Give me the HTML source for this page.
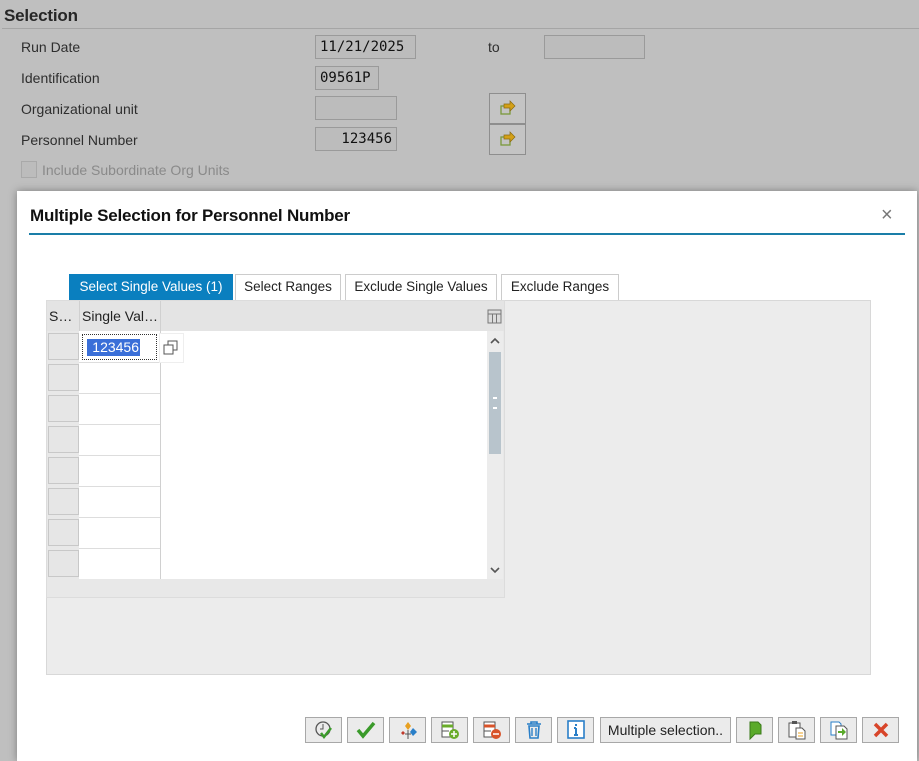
<!DOCTYPE html>
<html><head><style>
*{box-sizing:border-box;margin:0;padding:0}
body{width:919px;height:757px;background:#bfbfbf;font-family:"Liberation Sans",Arial,sans-serif;position:relative;overflow:hidden;color:#2a2a2a}
.a{position:absolute}
.lbl{font-size:14px;color:#2e2e2e}
.inp{background:#bcbcbc;border:1px solid #9a9a9a;font-family:"DejaVu Sans Mono","Liberation Mono",monospace;font-size:14px;color:#111;padding:3px 4px;line-height:16px;height:24px}
.vb{background:#c4c4c4;border:1px solid #8e8e8e;width:37px;height:31px}
.tab{position:absolute;top:274px;height:26px;border:1px solid #ccc;border-bottom:none;background:#fff;font-size:13.5px;color:#222;padding:4px 0;text-align:center;white-space:nowrap}
.rb{position:absolute;left:48px;width:31px;height:27px;background:#e6e6e6;border:1px solid #c8c8c8}
.hl{position:absolute;left:79px;width:81px;height:1px;background:#ddd}
.btn{position:absolute;top:717px;height:26px;width:37px;background:#ebebeb;border:1px solid #a8a8a8;display:flex;align-items:center;justify-content:center}
</style></head><body>
<div class="a" style="left:4px;top:6px;font-size:17px;font-weight:bold;color:#262626;letter-spacing:-0.2px">Selection</div>
<div class="a" style="left:2px;top:28px;width:917px;height:1px;background:#a5a5a5"></div>
<div class="a lbl" style="left:21px;top:39px">Run Date</div>
<div class="a lbl" style="left:21px;top:70px">Identification</div>
<div class="a lbl" style="left:21px;top:101px">Organizational unit</div>
<div class="a lbl" style="left:21px;top:132px">Personnel Number</div>
<div class="a lbl" style="left:488px;top:39px">to</div>
<div class="a inp" style="left:315px;top:35px;width:101px">11/21/2025</div>
<div class="a inp" style="left:544px;top:35px;width:101px"></div>
<div class="a inp" style="left:315px;top:66px;width:64px">09561P</div>
<div class="a inp" style="left:315px;top:96px;width:82px"></div>
<div class="a inp" style="left:315px;top:127px;width:82px;text-align:right">123456</div>
<div class="a vb" style="left:489px;top:93px"><svg width="35" height="29"><rect x="11" y="12" width="9" height="8" fill="none" stroke="#7a9a3a" stroke-width="1.3"/><path d="M14 10h6v-3l5 5-5 5v-3h-6z" fill="#d4a017" stroke="#8a6a10" stroke-width=".7"/></svg></div>
<div class="a vb" style="left:489px;top:124px"><svg width="35" height="29"><rect x="11" y="12" width="9" height="8" fill="none" stroke="#7a9a3a" stroke-width="1.3"/><path d="M14 10h6v-3l5 5-5 5v-3h-6z" fill="#d4a017" stroke="#8a6a10" stroke-width=".7"/></svg></div>
<div class="a" style="left:21px;top:161px;width:16px;height:17px;border:1px solid #a9a9a9;background:#bcbcbc"></div>
<div class="a" style="left:42px;top:162px;font-size:14px;color:#8a8a8a">Include Subordinate Org Units</div>

<div class="a" style="left:17px;top:191px;width:900px;height:570px;background:#fff;box-shadow:0 0 8px rgba(0,0,0,.35)"></div>
<div class="a" style="left:30px;top:206px;font-size:17px;font-weight:bold;color:#111;letter-spacing:-0.2px">Multiple Selection for Personnel Number</div>
<div class="a" style="left:881px;top:204px;font-size:20px;color:#777">×</div>
<div class="a" style="left:29px;top:233px;width:876px;height:2px;background:#1a7ea8"></div>

<div class="tab" style="left:69px;width:164px;background:#0a7fbf;color:#fff;border-color:#0a7fbf">Select Single Values (1)</div>
<div class="tab" style="left:235px;width:106px">Select Ranges</div>
<div class="tab" style="left:345px;width:152px">Exclude Single Values</div>
<div class="tab" style="left:501px;width:118px">Exclude Ranges</div>

<div class="a" style="left:46px;top:300px;width:825px;height:375px;background:#ececec;border:1px solid #d8d8d8"></div>
<div class="a" style="left:46px;top:300px;width:459px;height:298px;border:1px solid #dcdcdc;background:#e8e8e8"></div>
<div class="a" style="left:47px;top:301px;width:457px;height:30px;background:#e4e4e4"></div>
<div class="a" style="left:49px;top:308px;font-size:14px;color:#222">S…</div>
<div class="a" style="left:79px;top:301px;width:1px;height:278px;background:#d0d0d0"></div>
<div class="a" style="left:82px;top:308px;font-size:14px;color:#222">Single Val…</div>
<div class="a" style="left:160px;top:301px;width:1px;height:278px;background:#d0d0d0"></div>
<div class="a" style="left:79px;top:331px;width:408px;height:248px;background:#fff"></div>
<div class="a" style="left:160px;top:331px;width:1px;height:248px;background:#d0d0d0"></div>
<div class="a" style="left:487px;top:331px;width:16px;height:248px;background:#ececec"></div>
<div class="a" style="left:489px;top:352px;width:12px;height:102px;background:#b8c4cc"></div>
<div class="a" style="left:493px;top:397px;width:4px;height:12px;border-top:2px solid #fff;border-bottom:2px solid #fff"></div>
<svg class="a" style="left:489px;top:336px" width="12" height="10"><path d="M2 7l4-4 4 4" stroke="#555" stroke-width="1.6" fill="none"/></svg>
<svg class="a" style="left:489px;top:565px" width="12" height="10"><path d="M2 3l4 4 4-4" stroke="#555" stroke-width="1.6" fill="none"/></svg>
<svg class="a" style="left:487px;top:309px" width="15" height="15"><rect x="1" y="1" width="13" height="13" fill="#ddd" stroke="#777"/><path d="M1 5h13M5.5 5v9M9.5 5v9" stroke="#777"/></svg>

<div class="rb" style="top:333px"></div><div class="rb" style="top:364px"></div><div class="rb" style="top:395px"></div><div class="rb" style="top:426px"></div><div class="rb" style="top:457px"></div><div class="rb" style="top:488px"></div><div class="rb" style="top:519px"></div><div class="rb" style="top:550px"></div>
<div class="hl" style="top:362px"></div><div class="hl" style="top:393px"></div><div class="hl" style="top:424px"></div><div class="hl" style="top:455px"></div><div class="hl" style="top:486px"></div><div class="hl" style="top:517px"></div><div class="hl" style="top:548px"></div>
<div class="a" style="left:82px;top:334px;width:75px;height:26px;border:1px dotted #333;background:#fff"></div>
<div class="a" style="left:87px;top:339px;width:53px;height:17px;background:#3a6fd8;color:#fff;font-size:14px;text-align:right;padding-right:1px;line-height:17px">123456</div>
<div class="a" style="left:159px;top:333px;width:25px;height:30px;background:#fff;border:1px solid #eee"></div>
<svg class="a" style="left:163px;top:340px" width="16" height="16"><rect x="1" y="5" width="9" height="9" fill="#fff" stroke="#555"/><path d="M5 5V1h9v9h-4" fill="none" stroke="#555"/></svg>

<div class="btn" style="left:305px"><svg width="22" height="20"><circle cx="10" cy="9" r="7" fill="none" stroke="#555" stroke-width="1.3"/><path d="M10 4v5h-3" stroke="#555" fill="none"/><path d="M8 13l3 4 7-9" stroke="#3a9a2a" stroke-width="2.5" fill="none"/></svg></div>
<div class="btn" style="left:347px"><svg width="22" height="20"><path d="M3 10l5 6 11-13" stroke="#3a9a2a" stroke-width="3.5" fill="none"/></svg></div>
<div class="btn" style="left:389px"><svg width="22" height="20"><path d="M11 2l3 4-3 4-3-4z" fill="#e8a020"/><path d="M16 8l4 4-4 4-3-4z" fill="#2a7fc8"/><path d="M6 11l2 2-2 2-2-2z" fill="#c0392b"/><path d="M11 10v9M8 14h6" stroke="#555"/></svg></div>
<div class="btn" style="left:431px"><svg width="22" height="20"><rect x="3" y="2" width="11" height="15" fill="#fff" stroke="#555"/><path d="M3 6h11" stroke="#6aac2a" stroke-width="3"/><path d="M3 11h7" stroke="#555"/><circle cx="15" cy="14" r="5" fill="#6aac2a"/><path d="M15 11v6M12 14h6" stroke="#fff" stroke-width="1.5"/></svg></div>
<div class="btn" style="left:473px"><svg width="22" height="20"><rect x="3" y="2" width="11" height="15" fill="#fff" stroke="#555"/><path d="M3 6h11" stroke="#d8532a" stroke-width="3"/><path d="M3 11h7" stroke="#555"/><circle cx="15" cy="14" r="5" fill="#d8532a"/><path d="M12 14h6" stroke="#fff" stroke-width="1.5"/></svg></div>
<div class="btn" style="left:515px"><svg width="22" height="20"><path d="M4 4h14M8 4V2h6v2M6 6l1 12h8l1-12z" fill="none" stroke="#2a7fc8" stroke-width="1.6"/><path d="M9 8v8M13 8v8" stroke="#2a7fc8" stroke-width="1.4"/></svg></div>
<div class="btn" style="left:557px"><svg width="22" height="20"><rect x="3" y="1" width="16" height="17" fill="#fff" stroke="#2a7fc8" stroke-width="1.6"/><path d="M11 4v2M11 8v7M9 8h2M9 15h4" stroke="#2a7fc8" stroke-width="2"/></svg></div>
<div class="btn" style="left:600px;width:131px;font-size:14px;color:#222">Multiple selection..</div>
<div class="btn" style="left:736px"><svg width="22" height="20"><path d="M6 2h8l3 3v9h-6l-5 5z" fill="#5aaa2a" stroke="#3a7a1a"/></svg></div>
<div class="btn" style="left:778px"><svg width="22" height="20"><rect x="3" y="3" width="11" height="14" fill="#fff" stroke="#555"/><rect x="6" y="1" width="5" height="3" fill="#555"/><path d="M10 8h6l3 3v8h-9z" fill="#fff" stroke="#555"/><path d="M12 13h5M12 16h5" stroke="#e8a020"/></svg></div>
<div class="btn" style="left:820px"><svg width="22" height="20"><path d="M3 2h8l2 2v11H3z" fill="#fff" stroke="#2a7fc8"/><path d="M8 6h8l3 3v10H8z" fill="#fff" stroke="#555"/><path d="M10 11h4V8l4 4-4 4v-3h-4z" fill="#5aaa2a"/></svg></div>
<div class="btn" style="left:862px"><svg width="22" height="20"><path d="M5 4l12 12M17 4L5 16" stroke="#d8452a" stroke-width="3.5"/></svg></div>
</body></html>
